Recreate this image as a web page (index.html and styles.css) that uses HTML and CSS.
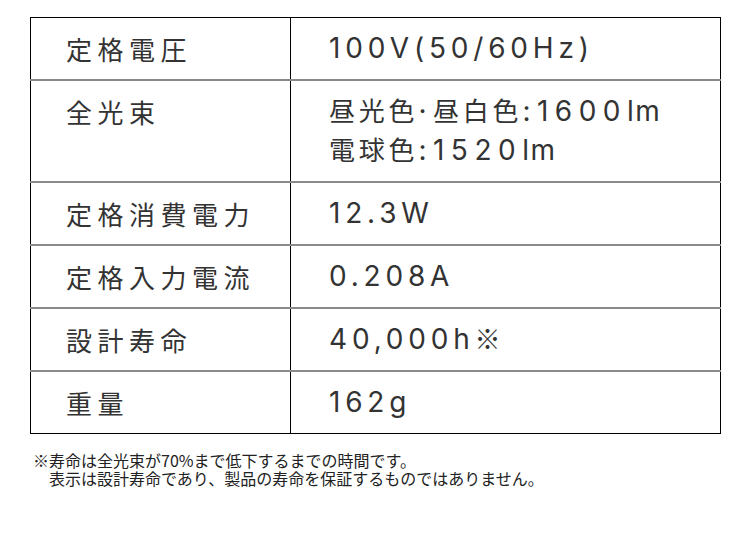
FILE: index.html
```html
<!DOCTYPE html>
<html lang="ja">
<head>
<meta charset="utf-8">
<link rel="stylesheet" href="styles.css">
</head>
<body>
<div class="page">
  <table class="spec">
    <tr>
      <th>定格電圧</th>
      <td>100V(50/60Hz)</td>
    </tr>
    <tr>
      <th>全光束</th>
      <td class="wide"><span class="ja">昼光色</span>·<span class="ja">昼白色</span>:1600<span class="unit">lm</span><br><span class="ja">電球色</span>:1520<span class="unit">lm</span></td>
    </tr>
    <tr>
      <th>定格消費電力</th>
      <td>12.3W</td>
    </tr>
    <tr>
      <th>定格入力電流</th>
      <td>0.208A</td>
    </tr>
    <tr>
      <th>設計寿命</th>
      <td>40,000h<span class="ja">※</span></td>
    </tr>
    <tr>
      <th>重量</th>
      <td>162g</td>
    </tr>
  </table>
  <p class="note">※寿命は全光束が70%まで低下するまでの時間です。<br>表示は設計寿命であり、製品の寿命を保証するものではありません。</p>
</div>
</body>
</html>
```

FILE: styles.css
```css
html, body {
  margin: 0;
  padding: 0;
  background: #fff;
}

.page {
  padding: 17px 0 0 30px;
}

.spec {
  border-collapse: collapse;
  width: 691px;
  border: 1px solid #000;
  color: #333;
}

.spec tr + tr {
  border-top: 2px solid #8a8a8a;
}

.spec th,
.spec td {
  vertical-align: top;
  padding: 11px 0 11px;
  line-height: 39px;
  text-align: left;
  font-weight: normal;
}

.spec th {
  width: 224px;
  padding-left: 35px;
  border-right: 1px solid #000;
  font-family: "Noto Sans CJK JP", sans-serif;
  font-size: 26px;
  letter-spacing: 5.5px;
}

.spec td {
  padding-left: 38px;
  font-family: "Inter", "Noto Sans CJK JP", sans-serif;
  font-size: 28px;
  letter-spacing: 4.8px;
}

.spec td.wide {
  letter-spacing: 6.5px;
}

.spec .ja {
  font-family: "Noto Sans CJK JP", sans-serif;
  font-size: 26px;
  line-height: 1;
  letter-spacing: 3.5px;
}

.spec td.wide .ja {
  letter-spacing: 3.8px;
}

.spec .unit {
  letter-spacing: 1.5px;
}

.note {
  margin: 17px 0 0 3px;
  padding-left: 16px;
  text-indent: -16px;
  font-family: "Noto Sans CJK JP", sans-serif;
  font-size: 16px;
  line-height: 18px;
  color: #222;
}
```
